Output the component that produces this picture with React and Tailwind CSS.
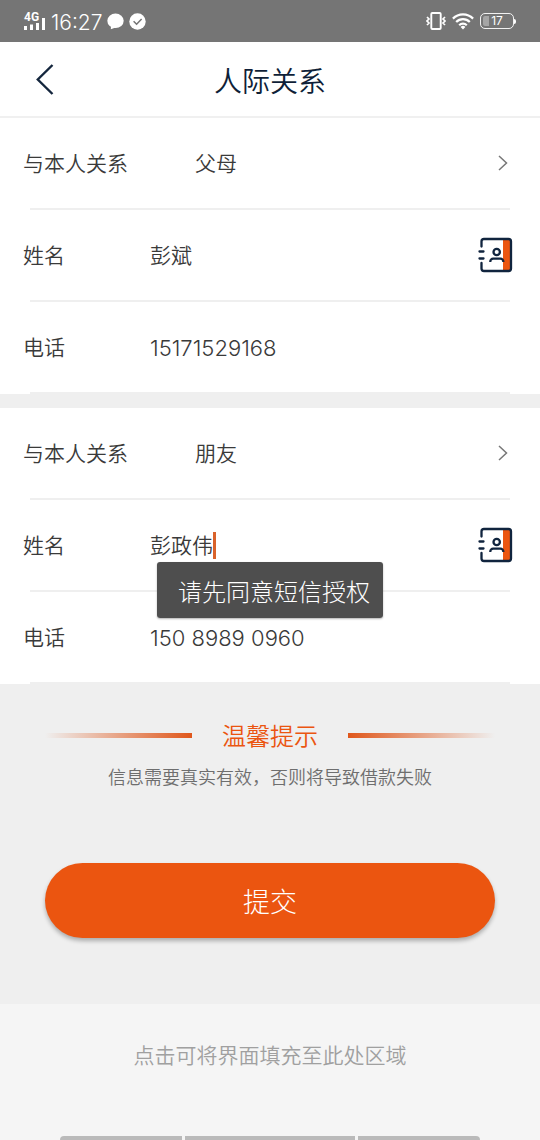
import { useState } from 'react';

// ─── Ícones ──────────────────────────────────────────────────────────────────

function SignalIcon() {
  return (
    <div className="relative h-[18px] w-[22px] font-['Roboto',sans-serif] text-white">
      <span className="absolute left-0 top-0 text-xs font-bold leading-[10px]">4G</span>
      <svg className="absolute inset-0" width="22" height="18" viewBox="0 0 22 18" fill="currentColor">
        <rect x="0" y="14" width="3" height="4" />
        <rect x="6" y="12.5" width="3" height="5.5" />
        <rect x="12" y="11" width="3" height="7" />
        <rect x="18" y="6" width="3" height="12" />
      </svg>
    </div>
  );
}

function ChatIcon() {
  return (
    <svg width="17" height="17" viewBox="0 0 17 17" fill="#fff">
      <ellipse cx="8.5" cy="7.8" rx="8.2" ry="7.2" />
      <path d="M4 12.5 3.8 16.2 10 14Z" />
    </svg>
  );
}

function CheckIcon() {
  return (
    <svg width="17" height="17" viewBox="0 0 17 17" fill="none">
      <circle cx="8.5" cy="8.5" r="8.2" fill="#fff" />
      <path d="m4.6 8.2 3 3 5-5.2" stroke="#757575" strokeWidth="1.5" />
    </svg>
  );
}

function VibrateIcon() {
  return (
    <svg width="20" height="18" viewBox="0 0 20 18" fill="none" stroke="#fff" strokeWidth="1.9">
      <rect x="5.3" y="1" width="9.4" height="16" rx="1" />
      <path d="m1 5 2 2-2 2 2 2-2 2M19 5l-2 2 2 2-2 2 2 2" strokeWidth="1.7" />
    </svg>
  );
}

function WifiIcon() {
  return (
    <svg width="22" height="17" viewBox="0 0 22 17" fill="none" stroke="#fff" strokeWidth="2.2">
      <path d="M.9 5.6a14.3 14.3 0 0 1 20.2 0M4.2 9a9.6 9.6 0 0 1 13.6 0M7.2 12.2a5.4 5.4 0 0 1 7.6 0" />
      <path d="M11 16.5 8.6 14a3.4 3.4 0 0 1 4.8 0Z" fill="#fff" stroke="none" />
    </svg>
  );
}

function Battery({ level }) {
  return (
    <div className="flex items-center">
      <div className="relative flex h-4 w-[34px] items-center justify-center rounded-[5px] border border-white/90 font-['Inter',sans-serif] text-xs font-normal leading-none text-white">
        <span className="absolute bottom-[2px] left-[2px] top-[2px] w-[6px] rounded-l-[2px] bg-white/35" />
        <span className="relative">{level}</span>
      </div>
      <span className="h-[5px] w-[2px] rounded-r-sm bg-white" />
    </div>
  );
}

function ContactsIcon() {
  return (
    <svg width="35" height="36" viewBox="0 0 35 36" fill="none" stroke="#10243e" strokeWidth="2.3">
      <rect x="25" y="2" width="8" height="32" fill="#eb5510" stroke="none" />
      <path
        d="M3.5 9.5V4.5a2.5 2.5 0 0 1 2.5-2.5h24.5a2.5 2.5 0 0 1 2.5 2.5v27a2.5 2.5 0 0 1-2.5 2.5H6a2.5 2.5 0 0 1-2.5-2.5V26"
        strokeLinecap="round"
      />
      <path d="M1.5 14.5h4M1.5 21.5h4" strokeLinecap="round" />
      <circle cx="18.7" cy="15" r="3.2" />
      <path d="M12.3 25v-.5a2.8 2.8 0 0 1 2.8-2.8h7.4a2.8 2.8 0 0 1 2.8 2.8v.5" />
    </svg>
  );
}

// ─── Barras do topo ──────────────────────────────────────────────────────────

function StatusBar() {
  return (
    <div className="flex h-[42px] items-center justify-between bg-[#757575] px-6">
      <div className="flex items-center">
        <SignalIcon />
        <span className="ml-[5px] mr-[5px] pt-[2px] font-['Inter',sans-serif] text-[21px] font-[350] leading-none text-white">
          16:27
        </span>
        <div className="flex gap-[5px]">
          <ChatIcon />
          <CheckIcon />
        </div>
      </div>
      <div className="flex items-center gap-[6px]">
        <VibrateIcon />
        <WifiIcon />
        <Battery level={17} />
      </div>
    </div>
  );
}

function TitleBar() {
  return (
    <header className="grid h-[76px] grid-cols-[90px_1fr_90px] items-center border-b-2 border-[#f0f0f0] bg-white">
      <button type="button" aria-label="返回" className="flex h-full items-center pl-9">
        <svg width="18" height="32" viewBox="0 0 18 32" fill="none" stroke="#14263d" strokeWidth="2.4">
          <path d="M16.5 2 1.8 16.5 16.5 31" />
        </svg>
      </button>
      <h1 className="pt-[2px] text-center text-[28px] leading-10 text-[#0f1f38]">人际关系</h1>
    </header>
  );
}

// ─── Formulário ──────────────────────────────────────────────────────────────

function Row({ children }) {
  return (
    <div className="flex h-[92px] flex-col">
      <div className="flex flex-1 items-center pl-[23px] pr-[27px]">{children}</div>
      <div className="mx-[30px] h-[2px] bg-[#efefef]" />
    </div>
  );
}

function ContactForm({ id, contact, focused }) {
  const [form, setForm] = useState(contact);
  const change = (field) => (e) => setForm({ ...form, [field]: e.target.value });

  return (
    <section className="bg-white text-[#3a3a3a]">
      <Row>
        <label htmlFor={`${id}-relation`} className="w-[172px] shrink-0">与本人关系</label>
        <select
          id={`${id}-relation`}
          value={form.relation}
          onChange={change('relation')}
          className="min-w-0 flex-1 appearance-none bg-transparent outline-none"
        >
          <option>父母</option>
          <option>配偶</option>
          <option>朋友</option>
        </select>
        <svg className="mr-1" width="12" height="18" viewBox="0 0 12 18" fill="none" stroke="#777" strokeWidth="1.5">
          <path d="m2 2 7.5 7L2 16" />
        </svg>
      </Row>
      <Row>
        <label htmlFor={`${id}-name`} className="w-[127px] shrink-0">姓名</label>
        <div className="flex flex-1 items-center">
          <input
            id={`${id}-name`}
            value={form.name}
            onChange={change('name')}
            className="bg-transparent caret-[#eb5510] outline-none [field-sizing:content]"
          />
          {focused && <span className="h-[27px] w-[3px] bg-[#d9622b]" />}
        </div>
        <button type="button" aria-label="通讯录">
          <ContactsIcon />
        </button>
      </Row>
      <Row>
        <label htmlFor={`${id}-phone`} className="w-[127px] shrink-0">电话</label>
        <input
          id={`${id}-phone`}
          type="tel"
          value={form.phone}
          onChange={change('phone')}
          className="min-w-0 flex-1 bg-transparent pt-[2px] font-['Inter',sans-serif] text-[22px] outline-none"
        />
      </Row>
    </section>
  );
}

function Tips() {
  return (
    <section className="pt-[33px] text-center">
      <div className="flex items-center px-[45px]">
        <span className="h-[5px] flex-1 bg-linear-to-r from-transparent to-[#e0571b]" />
        <h2 className="w-[156px] text-2xl leading-9 text-[#eb5510]">温馨提示</h2>
        <span className="h-[5px] flex-1 bg-linear-to-l from-transparent to-[#e0571b]" />
      </div>
      <p className="mt-[9px] text-lg leading-7 text-[#6e6e6e]">信息需要真实有效，否则将导致借款失败</p>
    </section>
  );
}

export default function App() {
  return (
    <div className="relative min-h-screen overflow-hidden bg-[#efefef] font-['Noto_Sans_CJK_SC',sans-serif] text-[21px] font-[350]">
      <StatusBar />
      <TitleBar />

      <form onSubmit={(e) => e.preventDefault()}>
        <div className="flex flex-col gap-[14px]">
          <ContactForm id="first" contact={{ relation: '父母', name: '彭斌', phone: '15171529168' }} />
          <ContactForm id="second" contact={{ relation: '朋友', name: '彭政伟', phone: '150 8989 0960' }} focused />
        </div>
        <Tips />
        <div className="px-[45px] pb-[66px] pt-[73px]">
          <button
            type="submit"
            className="h-[75px] w-full rounded-full bg-[#eb5510] pt-[2px] text-[27px] font-light text-white shadow-[0_3px_4px_rgba(0,0,0,0.28)]"
          >
            提交
          </button>
        </div>
      </form>

      <footer className="bg-[#f5f5f5] text-center text-[#a0a0a0]">
        <button type="button" className="h-[102px] w-full">点击可将界面填充至此处区域</button>
        <div className="mx-[60px] mt-[30px] flex h-1 gap-[3px]">
          <span className="w-[122px] rounded-tl-sm bg-[#bababa]" />
          <span className="flex-1 bg-[#bababa]" />
          <span className="w-[122px] rounded-tr-sm bg-[#bababa]" />
        </div>
      </footer>

      {/* Toast */}
      <div
        role="status"
        className="absolute left-1/2 top-[562px] -translate-x-1/2 whitespace-nowrap rounded-[3px] bg-[#484848]/97 pb-[9px] pl-[21px] pr-[13px] pt-[11px] text-2xl font-light leading-9 text-white shadow-[0_1px_2px_rgba(0,0,0,0.3)]"
      >
        请先同意短信授权
      </div>
    </div>
  );
}
